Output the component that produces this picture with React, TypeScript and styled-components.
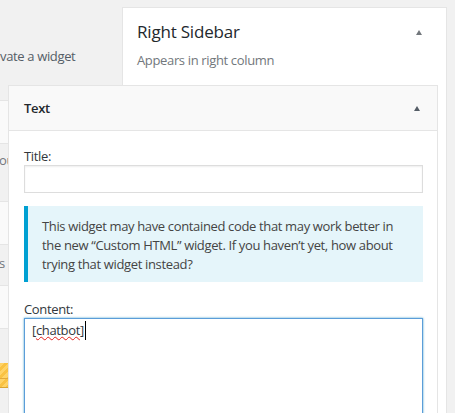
import React from "react";
import styled, { createGlobalStyle } from "styled-components";

const Global = createGlobalStyle`
  html, body { margin: 0; padding: 0; background: #f1f1f1; }
  body {
    font-family: "Open Sans", "Noto Sans", sans-serif;
    font-size: 13px;
    letter-spacing: -0.35px;
    color: #444;
  }
  * { box-sizing: border-box; }
`;

const Page = styled.div`
  display: flex;
  width: 455px;
  height: 413px;
  overflow: hidden;
  background: #f1f1f1;
`;

const LeftCol = styled.div`
  width: 122px;
  flex-shrink: 0;
  padding-top: 47px;
`;

const Intro = styled.p`
  margin: 0;
  line-height: 19px;
  color: #555d66;
  white-space: nowrap;
`;

const AvailList = styled.div`
  margin-top: 34px;
  display: flex;
  flex-direction: column;
`;

const AvailItem = styled.div`
  height: 44px;
  background: #fafafa;
  border-top: 1px solid #e5e5e5;
  border-bottom: 1px solid #e5e5e5;
`;

const AvailDesc = styled.div<{ $h: number; $pad: number }>`
  height: ${(p) => p.$h}px;
  padding-top: ${(p) => p.$pad}px;
  line-height: 19px;
  color: #72777c;
  white-space: nowrap;
  margin-left: -1px;
`;

const Sep = styled.span`
  color: #c8b6a0;
`;

const Placeholder = styled.div`
  height: 25px;
  border-bottom: 1px solid #d9a433;
  background:
    linear-gradient(#e2a93a, #e2a93a) 0 15px / 100% 1px no-repeat,
    repeating-linear-gradient(135deg, #ffd366 0 3px, #f9c243 3px 6px);
`;

const Card = styled.div`
  position: relative;
  z-index: 1;
  width: 325px;
  flex-shrink: 0;
  margin-top: 7px;
  background: #fff;
  border: 1px solid #e5e5e5;
  border-bottom: none;
  display: flex;
  flex-direction: column;
`;

const CardHead = styled.div`
  display: flex;
  align-items: center;
  justify-content: space-between;
  padding: 12px 24px 0 14px;
`;

const CardTitle = styled.h2`
  margin: 0;
  font-size: 17px;
  line-height: 24px;
  font-weight: 400;
  letter-spacing: -0.2px;
  color: #23282d;
`;

const Arrow = styled.span<{ $color: string }>`
  width: 0;
  height: 0;
  border-left: 3.5px solid transparent;
  border-right: 3.5px solid transparent;
  border-bottom: 5px solid ${(p) => p.$color};
`;

const CardDesc = styled.p`
  margin: 7px 0 0 14px;
  line-height: 19px;
  color: #72777c;
`;

const Widget = styled.div`
  margin: 15px 8px 0 -115px;
  background: #fff;
  border: 1px solid #e5e5e5;
  border-bottom: none;
`;

const WidgetTop = styled.div`
  height: 45px;
  display: flex;
  align-items: center;
  justify-content: space-between;
  padding: 0 17px 0 15px;
  background: #f9f9f9;
  border-bottom: 1px solid #e5e5e5;
`;

const WidgetTitle = styled.h3`
  margin: 0;
  font-size: 13px;
  line-height: 19px;
  font-weight: 600;
  color: #23282d;
`;

const WidgetInside = styled.div`
  padding: 16px 14px 0 15px;
  display: flex;
  flex-direction: column;
`;

const Label = styled.label`
  line-height: 19px;
  color: #32373c;
`;

const TextInput = styled.div`
  height: 28px;
  margin-top: -1px;
  border: 1px solid #ddd;
  box-shadow: inset 0 1px 2px rgba(0, 0, 0, 0.07);
  background: #fff;
`;

const Notice = styled.div`
  margin: 13px 0 18px;
  height: 76px;
  background: #e5f5fa;
  border-left: 4px solid #00a0d2;
  padding: 11px 12px 0 14px;
  line-height: 19px;
  color: #444;
`;

const TextArea = styled.div`
  height: 220px;
  margin-top: -1px;
  border: 1px solid #5b9dd9;
  box-shadow: 0 0 2px rgba(30, 140, 190, 0.8);
  padding: 2px 7px;
  line-height: 19px;
  color: #32373c;
`;

const Misspelled = styled.span`
  text-decoration: underline wavy #e0201b;
  text-decoration-thickness: 1px;
  text-underline-offset: 1px;
`;

const Caret = styled.span`
  display: inline-block;
  width: 1px;
  height: 19px;
  margin-left: 1px;
  vertical-align: top;
  background: #000;
`;

export default function App() {
  return (
    <>
      <Global />
      <Page>
        <LeftCol>
          <Intro>vate a widget</Intro>
          <AvailList>
            <AvailItem />
            <AvailDesc $h={57} $pad={7}>ou</AvailDesc>
            <AvailItem />
            <AvailDesc $h={40} $pad={9}>
              s <Sep>|</Sep>
            </AvailDesc>
            <AvailItem />
            <AvailDesc $h={34} $pad={0} />
            <Placeholder />
          </AvailList>
        </LeftCol>
        <Card>
          <CardHead>
            <CardTitle>Right Sidebar</CardTitle>
            <Arrow $color="#72777c" />
          </CardHead>
          <CardDesc>Appears in right column</CardDesc>
          <Widget>
            <WidgetTop>
              <WidgetTitle>Text</WidgetTitle>
              <Arrow $color="#555d66" />
            </WidgetTop>
            <WidgetInside>
              <Label>Title:</Label>
              <TextInput />
              <Notice>
                This widget may have contained code that may work better in the new “Custom HTML” widget. If you
                haven’t yet, how about trying that widget instead?
              </Notice>
              <Label>Content:</Label>
              <TextArea>
                [<Misspelled>chatbot</Misspelled>]<Caret />
              </TextArea>
            </WidgetInside>
          </Widget>
        </Card>
      </Page>
    </>
  );
}
